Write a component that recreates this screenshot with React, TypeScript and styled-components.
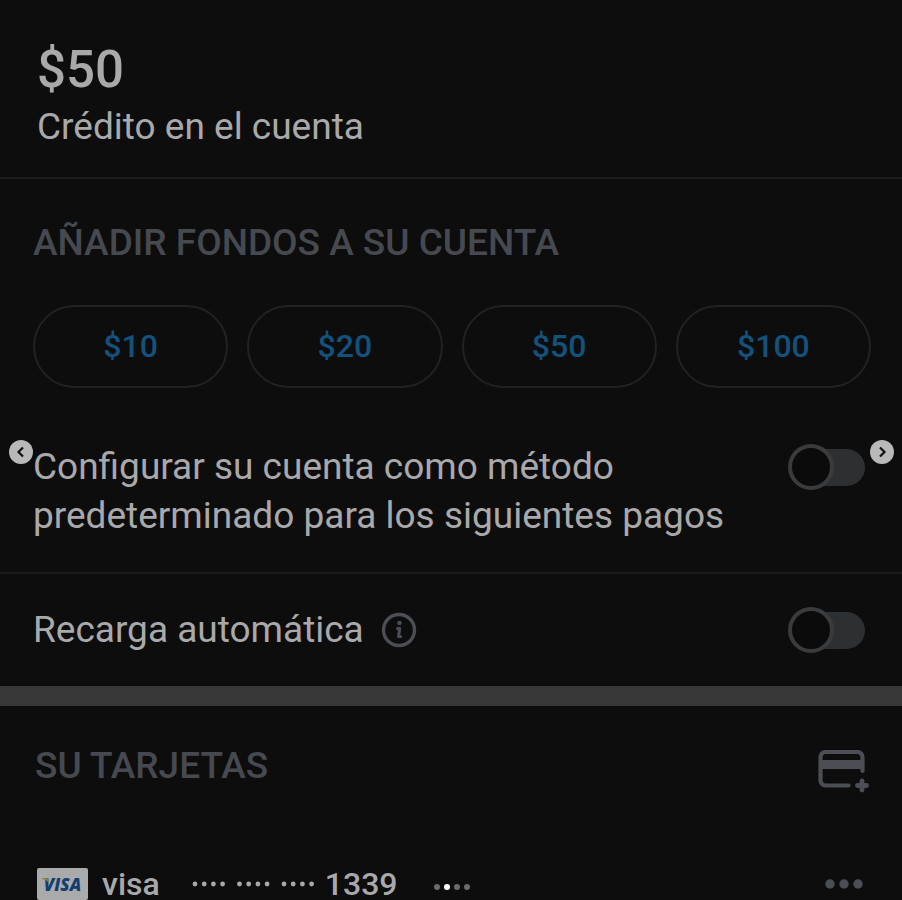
import React, { useId, useState } from "react";
import styled, { createGlobalStyle } from "styled-components";

const GlobalStyle = createGlobalStyle`
  * { box-sizing: border-box; }
  body {
    margin: 0;
    background: #0d0d0d;
    color: #a9a9ab;
    font-family: Roboto, "Liberation Sans", sans-serif;
    font-size: 37px;
    line-height: 48px;
  }
  h1, h2, p { margin: 0; }
  button { font-family: inherit; cursor: pointer; }
`;

const Page = styled.main`
  position: relative;
  min-height: 100vh;
  background: #0d0d0d;
`;

const Balance = styled.header`
  padding: 40px 37px 26px;
  border-bottom: 2px solid #1b1b1b;
`;

const Amount = styled.h1`
  font-size: 51px;
  line-height: 60px;
  font-weight: 500;
`;

const Caption = styled.p`
  padding-top: 3px;
`;

const Section = styled.section`
  padding: 40px 31px 0 33px;
`;

const Heading = styled.h2`
  font-size: 37px;
  line-height: 48px;
  font-weight: 500;
  color: #464a50;
`;

const Chips = styled.div`
  display: grid;
  grid-template-columns: repeat(4, 1fr);
  gap: 19px;
  margin-top: 38px;
`;

const Chip = styled.button`
  height: 83px;
  padding: 0 0 2px;
  border: 2px solid #222223;
  border-radius: 42px;
  background: transparent;
  color: #13527d;
  font-size: 32px;
  font-weight: 500;
`;

const Setting = styled.div<{ $top: number }>`
  display: flex;
  justify-content: space-between;
  align-items: flex-start;
  padding: ${(p) => p.$top}px 37px 32px 33px;
`;

const SettingText = styled.div`
  display: flex;
  align-items: center;
  gap: 17px;
  max-width: 720px;
  line-height: 49px;
`;

const Divider = styled.hr`
  height: 2px;
  margin: 0;
  border: 0;
  background: #1b1b1b;
`;

const Band = styled.div`
  height: 20px;
  background: #373737;
`;

const Track = styled.span`
  position: relative;
  flex: none;
  display: flex;
  align-items: center;
  width: 77px;
  height: 46px;
  margin-top: 2px;

  &::before {
    content: "";
    flex: 1;
    height: 37px;
    margin-left: 8px;
    border-radius: 19px;
    background: #2c3033;
  }
`;

const Knob = styled.span`
  position: absolute;
  left: 0;
  width: 46px;
  height: 46px;
  border: 4px solid #3a3b3d;
  border-radius: 50%;
  background: #0b0b0b;
  pointer-events: none;
`;

const Check = styled.input`
  position: absolute;
  inset: 0;
  width: 100%;
  height: 100%;
  margin: 0;
  opacity: 0;
  cursor: pointer;

  &:checked + ${Knob} {
    left: auto;
    right: 0;
  }
`;

const IconButton = styled.button`
  display: flex;
  padding: 0;
  border: 0;
  background: transparent;
  color: #4b4f55;
`;

const AddCardButton = styled(IconButton)`
  padding-top: 8px;
`;

const CardsHeader = styled.div`
  display: flex;
  justify-content: space-between;
  align-items: flex-start;
  padding: 36px 32px 0 35px;
`;

const CardRow = styled.div`
  display: flex;
  align-items: center;
  padding: 74px 38px 0 37px;
  font-size: 32px;
  line-height: 32px;
  font-weight: 500;
`;

const CardName = styled.span`
  margin: 0 32px 0 14px;
`;

const CardNumber = styled.span`
  display: flex;
  align-items: center;
  gap: 9px;
`;

const More = styled(IconButton)`
  margin-left: auto;
`;

const Arrow = styled.button<{ $side: "left" | "right" }>`
  position: absolute;
  top: 440px;
  ${(p) => p.$side}: ${(p) => (p.$side === "left" ? 9 : 8)}px;
  display: flex;
  width: 24px;
  height: 24px;
  padding: 0;
  border: 0;
  border-radius: 50%;
  background: #b8b8b8;
`;

const Pager = styled.div`
  position: absolute;
  bottom: 10px;
  left: 2px;
  right: 0;
  display: flex;
  justify-content: center;
  gap: 4px;
`;

const Dot = styled.span<{ $active: boolean }>`
  width: 6px;
  height: 6px;
  border-radius: 50%;
  background: ${(p) => (p.$active ? "#ffffff" : "#6b6b6b")};
`;

function Toggle({ id }: { id: string }) {
  const [on, setOn] = useState(false);
  return (
    <Track>
      <Check id={id} type="checkbox" role="switch" checked={on} onChange={() => setOn(!on)} />
      <Knob />
    </Track>
  );
}

function InfoIcon() {
  return (
    <svg width="36" height="36" viewBox="0 0 36 36" fill="none" stroke="currentColor">
      <circle cx="18" cy="18" r="15.5" strokeWidth="3.4" />
      <circle cx="18.5" cy="11" r="2.3" fill="currentColor" stroke="none" />
      <path d="M16.5 16.5h2.2l-1.2 8h2.2" strokeWidth="3" strokeLinecap="round" strokeLinejoin="round" />
    </svg>
  );
}

function AddCardIcon() {
  return (
    <svg width="52" height="44" viewBox="0 0 52 44" fill="none" stroke="currentColor" strokeLinecap="round">
      <path d="M30.5 35.5H7.5a5 5 0 0 1-5-5V7a5 5 0 0 1 5-5H39.5a5 5 0 0 1 5 5V21" strokeWidth="4.2" />
      <path d="M3 10H46V19H3z" fill="currentColor" stroke="none" />
      <path d="M44 31V40M39.5 35.5H48.5" strokeWidth="4.8" />
    </svg>
  );
}

const VisaPlate = styled.span`
  display: flex;
  flex: none;
  align-items: center;
  justify-content: center;
  width: 51px;
  height: 32px;
  border-radius: 2px;
  background: #a9aaac;
`;

const VisaMark = styled.span`
  position: relative;
  color: #123f70;
  font: italic 800 17px/17px "Open Sans", sans-serif;
`;

const VisaFlick = styled.svg`
  position: absolute;
  left: -2px;
  top: 2px;
`;

function VisaLogo() {
  return (
    <VisaPlate>
      <VisaMark>
        VISA
        <VisaFlick width="8" height="7" viewBox="0 0 8 7">
          <path d="M0 0h4.5q1.5 0 1.8 1.5L7 5Q4.5 1.8 0 .8z" fill="#8e8140" />
        </VisaFlick>
      </VisaMark>
    </VisaPlate>
  );
}

function MaskDots() {
  return (
    <svg width="124" height="6" viewBox="0 0 124 6" fill="currentColor" role="img" aria-label="Número oculto">
      {[0, 1, 2].flatMap((group) =>
        [0, 1, 2, 3].map((n) => (
          <circle key={`${group}-${n}`} cx={3 + group * 44.5 + n * 9.2} cy="3" r="2.4" />
        )),
      )}
    </svg>
  );
}

export default function App() {
  const base = useId();
  const [slide, setSlide] = useState(1);
  return (
    <>
      <GlobalStyle />
      <Page>
        <Balance>
          <Amount>$50</Amount>
          <Caption>Crédito en el cuenta</Caption>
        </Balance>

        <Section>
          <Heading>AÑADIR FONDOS A SU CUENTA</Heading>
          <Chips>
            {[10, 20, 50, 100].map((value) => (
              <Chip key={value} type="button">${value}</Chip>
            ))}
          </Chips>
        </Section>

        <Setting $top={54}>
          <SettingText>
            <label htmlFor={`${base}-default`}>
              Configurar su cuenta como método predeterminado para los siguientes pagos
            </label>
          </SettingText>
          <Toggle id={`${base}-default`} />
        </Setting>
        <Divider />
        <Setting $top={31}>
          <SettingText>
            <label htmlFor={`${base}-auto`}>Recarga automática</label>
            <IconButton type="button" aria-label="Información">
              <InfoIcon />
            </IconButton>
          </SettingText>
          <Toggle id={`${base}-auto`} />
        </Setting>
        <Band />

        <CardsHeader>
          <Heading>SU TARJETAS</Heading>
          <AddCardButton type="button" aria-label="Añadir tarjeta">
            <AddCardIcon />
          </AddCardButton>
        </CardsHeader>
        <CardRow>
          <VisaLogo />
          <CardName>visa</CardName>
          <CardNumber>
            <MaskDots />
            1339
          </CardNumber>
          <More type="button" aria-label="Más opciones">
            <svg width="39" height="10" viewBox="0 0 39 10" fill="currentColor">
              <circle cx="5" cy="5" r="4.7" />
              <circle cx="19" cy="5" r="4.7" />
              <circle cx="33" cy="5" r="4.7" />
            </svg>
          </More>
        </CardRow>

        <Arrow $side="left" type="button" aria-label="Anterior" onClick={() => setSlide(Math.max(0, slide - 1))}>
          <svg width="24" height="24" viewBox="0 0 24 24" fill="none" stroke="#111111" strokeWidth="2.2">
            <path d="M14 7.5 9.5 12l4.5 4.5" />
          </svg>
        </Arrow>
        <Arrow $side="right" type="button" aria-label="Siguiente" onClick={() => setSlide(Math.min(3, slide + 1))}>
          <svg width="24" height="24" viewBox="0 0 24 24" fill="none" stroke="#111111" strokeWidth="2.2">
            <path d="m10 7.5 4.5 4.5-4.5 4.5" />
          </svg>
        </Arrow>
        <Pager>
          {[0, 1, 2, 3].map((n) => (
            <Dot key={n} $active={n === slide} />
          ))}
        </Pager>
      </Page>
    </>
  );
}
